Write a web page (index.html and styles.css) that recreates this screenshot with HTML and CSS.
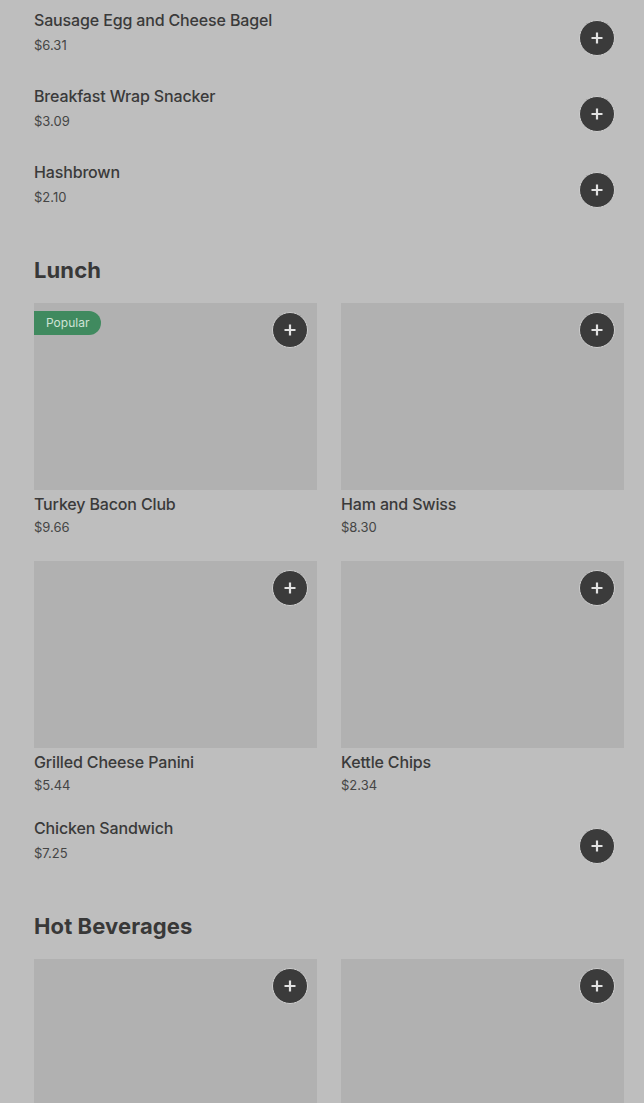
FILE: index.html
```html
<!DOCTYPE html>
<html lang="en">
<head>
<meta charset="utf-8">
<link rel="stylesheet" href="styles.css">
<title>Menu</title>
</head>
<body>
<main class="menu">
  <section class="section first">
    <div class="row">
      <div class="info"><div class="name">Sausage Egg and Cheese Bagel</div><div class="price">$6.31</div></div>
      <button class="add"><svg viewBox="0 0 16 16" width="16" height="16"><path d="M8 2.5v11M2.5 8h11" stroke="currentColor" stroke-width="2.2" fill="none"/></svg></button>
    </div>
    <div class="row">
      <div class="info"><div class="name">Breakfast Wrap Snacker</div><div class="price">$3.09</div></div>
      <button class="add"><svg viewBox="0 0 16 16" width="16" height="16"><path d="M8 2.5v11M2.5 8h11" stroke="currentColor" stroke-width="2.2" fill="none"/></svg></button>
    </div>
    <div class="row">
      <div class="info"><div class="name">Hashbrown</div><div class="price">$2.10</div></div>
      <button class="add"><svg viewBox="0 0 16 16" width="16" height="16"><path d="M8 2.5v11M2.5 8h11" stroke="currentColor" stroke-width="2.2" fill="none"/></svg></button>
    </div>
  </section>

  <section class="section">
    <h2 class="title">Lunch</h2>
    <div class="grid">
      <div class="card">
        <div class="image">
          <span class="badge">Popular</span>
          <button class="add card-add"><svg viewBox="0 0 16 16" width="16" height="16"><path d="M8 2.5v11M2.5 8h11" stroke="currentColor" stroke-width="2.2" fill="none"/></svg></button>
        </div>
        <div class="name">Turkey Bacon Club</div><div class="price">$9.66</div>
      </div>
      <div class="card">
        <div class="image">
          <button class="add card-add"><svg viewBox="0 0 16 16" width="16" height="16"><path d="M8 2.5v11M2.5 8h11" stroke="currentColor" stroke-width="2.2" fill="none"/></svg></button>
        </div>
        <div class="name">Ham and Swiss</div><div class="price">$8.30</div>
      </div>
      <div class="card">
        <div class="image">
          <button class="add card-add"><svg viewBox="0 0 16 16" width="16" height="16"><path d="M8 2.5v11M2.5 8h11" stroke="currentColor" stroke-width="2.2" fill="none"/></svg></button>
        </div>
        <div class="name">Grilled Cheese Panini</div><div class="price">$5.44</div>
      </div>
      <div class="card">
        <div class="image">
          <button class="add card-add"><svg viewBox="0 0 16 16" width="16" height="16"><path d="M8 2.5v11M2.5 8h11" stroke="currentColor" stroke-width="2.2" fill="none"/></svg></button>
        </div>
        <div class="name">Kettle Chips</div><div class="price">$2.34</div>
      </div>
    </div>
    <div class="row after-grid">
      <div class="info"><div class="name">Chicken Sandwich</div><div class="price">$7.25</div></div>
      <button class="add"><svg viewBox="0 0 16 16" width="16" height="16"><path d="M8 2.5v11M2.5 8h11" stroke="currentColor" stroke-width="2.2" fill="none"/></svg></button>
    </div>
  </section>

  <section class="section">
    <h2 class="title">Hot Beverages</h2>
    <div class="grid">
      <div class="card">
        <div class="image">
          <button class="add card-add"><svg viewBox="0 0 16 16" width="16" height="16"><path d="M8 2.5v11M2.5 8h11" stroke="currentColor" stroke-width="2.2" fill="none"/></svg></button>
        </div>
      </div>
      <div class="card">
        <div class="image">
          <button class="add card-add"><svg viewBox="0 0 16 16" width="16" height="16"><path d="M8 2.5v11M2.5 8h11" stroke="currentColor" stroke-width="2.2" fill="none"/></svg></button>
        </div>
      </div>
    </div>
  </section>
</main>
</body>
</html>
```

FILE: styles.css
```css
* { box-sizing: border-box; }
html, body { margin: 0; padding: 0; }
body {
  background: #bebebe;
  font-family: Inter, "Noto Sans", sans-serif;
  color: #383838;
  overflow: hidden;
}
.menu {
  padding: 0 20px 0 34px;
}
.section { padding-top: 28px; }
.section.first { padding-top: 0; }
.title {
  margin: 0 0 19px;
  font-size: 22px;
  line-height: 28px;
  font-weight: 700;
  letter-spacing: 0.1px;
  color: #383838;
}
.row {
  display: flex;
  justify-content: space-between;
  align-items: flex-start;
  height: 76px;
}
.row.after-grid { margin-top: 13px; }
.info { padding-top: 8px; }
.name {
  font-size: 16px;
  line-height: 24px;
  font-weight: 500;
  letter-spacing: -0.15px;
  color: #3a3a3a;
}
.price {
  font-size: 13px;
  line-height: 20px;
  margin-top: 1px;
  color: #454545;
}
.row .price { margin-top: 3px; }
.add {
  width: 36px;
  height: 36px;
  border-radius: 50%;
  background: #3b3b3b;
  border: 1px solid #cfcfcf;
  color: #e2e2e2;
  display: flex;
  align-items: center;
  justify-content: center;
  padding: 0;
  flex: none;
}
.row .add { margin-top: 20px; margin-right: 9px; }
.grid {
  display: grid;
  grid-template-columns: 1fr 1fr;
  gap: 24px;
}
.image {
  position: relative;
  height: 187px;
  background: #b1b1b1;
  margin-bottom: 2px;
}
.card-add {
  position: absolute;
  top: 9px;
  right: 9px;
}
.badge {
  position: absolute;
  top: 8px;
  left: 0;
  height: 24px;
  padding: 0 12px;
  background: #408a5f;
  color: #cfe3d6;
  font-size: 12px;
  line-height: 24px;
  border-radius: 0 12px 12px 0;
}
```
